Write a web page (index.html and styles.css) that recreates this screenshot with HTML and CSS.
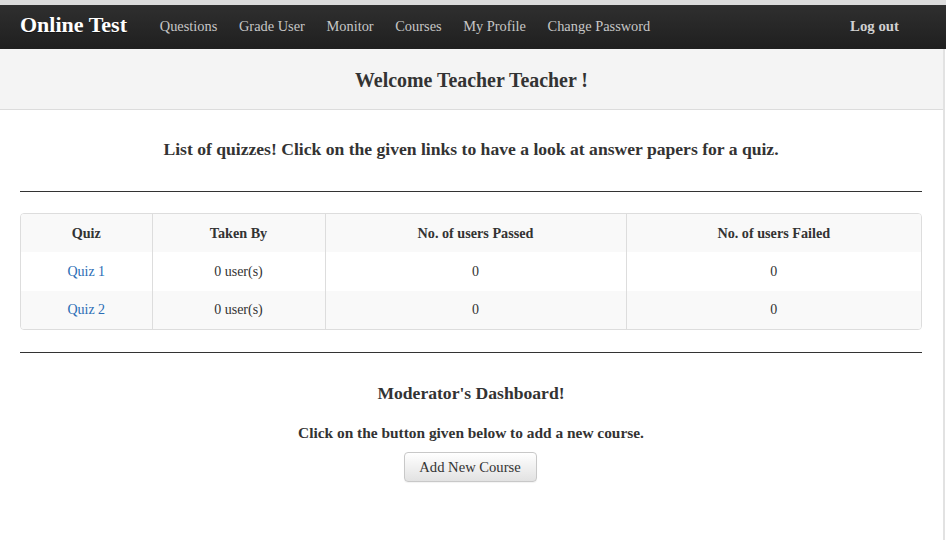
FILE: index.html
```html
<!DOCTYPE html>
<html>
<head>
<meta charset="utf-8">
<title>Online Test</title>
<link rel="stylesheet" href="styles.css">
</head>
<body>
<div class="topstrip"></div>
<nav class="navbar">
  <a class="brand" href="#">Online Test</a>
  <ul class="nav-links">
    <li><a href="#">Questions</a></li>
    <li><a href="#">Grade User</a></li>
    <li><a href="#">Monitor</a></li>
    <li><a href="#">Courses</a></li>
    <li><a href="#">My Profile</a></li>
    <li><a href="#">Change Password</a></li>
  </ul>
  <a class="logout" href="#">Log out</a>
</nav>
<div class="page">
  <div class="welcome"><h2>Welcome Teacher Teacher !</h2></div>
  <div class="content">
    <h3 class="intro">List of quizzes! Click on the given links to have a look at answer papers for a quiz.</h3>
    <hr class="rule">
    <div class="table-wrap">
      <table class="quiz-table">
        <colgroup>
          <col class="c1"><col class="c2"><col class="c3"><col class="c4">
        </colgroup>
        <thead>
          <tr><th>Quiz</th><th>Taken By</th><th>No. of users Passed</th><th>No. of users Failed</th></tr>
        </thead>
        <tbody>
          <tr><td><a href="#">Quiz 1</a></td><td>0 user(s)</td><td>0</td><td>0</td></tr>
          <tr class="alt"><td><a href="#">Quiz 2</a></td><td>0 user(s)</td><td>0</td><td>0</td></tr>
        </tbody>
      </table>
    </div>
    <hr class="rule rule2">
    <h3 class="mod">Moderator's Dashboard!</h3>
    <h4 class="click">Click on the button given below to add a new course.</h4>
    <div class="btn-row"><button class="btn">Add New Course</button></div>
  </div>
</div>
</body>
</html>
```
FILE: styles.css
```css
html, body {
  margin: 0;
  padding: 0;
  background: #fff;
  font-family: "Liberation Serif", "Times New Roman", serif;
  color: #333;
}
.topstrip {
  height: 5px;
  background: #dcdcdc;
}
.navbar {
  height: 44px;
  box-sizing: border-box;
  padding: 0 47px 2px 20px;
  background: linear-gradient(#2f2f2f, #1f1f1f);
  display: flex;
  align-items: center;
}
.navbar a { text-decoration: none; }
.brand {
  color: #fff;
  font-weight: bold;
  font-size: 22px;
  margin-right: 22px;
  margin-bottom: 2px;
  text-shadow: 0 1px 0 rgba(0,0,0,0.4);
}
.nav-links {
  list-style: none;
  display: flex;
  margin: 0;
  padding: 0;
  flex: 1;
}
.nav-links a {
  display: block;
  color: #c6c6c6;
  font-size: 14.4px;
  padding: 0 10.8px;
}
.logout {
  color: #d0d0d0;
  font-weight: bold;
  font-size: 14.8px;
}
.page {
  margin-right: 1px;
  border-right: 2px solid #e2e2e2;
  min-height: 491px;
}
.welcome {
  background: #f4f4f4;
  border-bottom: 1px solid #dcdcdc;
  height: 61px;
  box-sizing: border-box;
  padding-top: 3px;
  display: flex;
  align-items: center;
  justify-content: center;
}
.welcome h2 {
  margin: 0;
  font-size: 19.9px;
  font-weight: bold;
  color: #333;
}
.content {
  padding: 0 21px 0 20px;
}
.intro {
  margin: 29px 0 0;
  font-size: 17.6px;
  line-height: 20px;
  text-align: center;
}
.rule {
  border: 0;
  border-top: 1px solid #333;
  margin: 32px 0 0;
  height: 0;
}
.table-wrap {
  margin-top: 21px;
  border: 1px solid #ddd;
  border-radius: 4px;
  overflow: hidden;
}
.quiz-table {
  width: 100%;
  border-collapse: collapse;
  table-layout: fixed;
  font-size: 14px;
}
.c1 { width: 131px; }
.c2 { width: 173px; }
.c3 { width: 301px; }
.quiz-table th, .quiz-table td {
  text-align: center;
  border-left: 1px solid #ddd;
  padding: 0;
}
.quiz-table th:first-child, .quiz-table td:first-child { border-left: 0; }
.quiz-table thead tr { height: 38px; background: #f9f9f9; }
.quiz-table th { font-weight: bold; font-size: 14.2px; }
.quiz-table tbody tr { height: 39px; background: #fff; }
.quiz-table tbody tr.alt { height: 38px; background: #f9f9f9; }
.quiz-table a { color: #2a6db5; text-decoration: none; }
.rule2 { margin-top: 22px; }
.mod {
  margin: 30px 0 0;
  font-size: 17.6px;
  line-height: 20px;
  text-align: center;
}
.click {
  margin: 21px 0 0;
  font-size: 15.4px;
  line-height: 18px;
  text-align: center;
}
.btn-row {
  display: flex;
  justify-content: center;
  margin-top: 10px;
  padding-right: 2px;
}
.btn {
  font-family: "Liberation Serif", "Times New Roman", serif;
  font-size: 14.6px;
  color: #333;
  width: 133px;
  height: 30px;
  border: 1px solid #c8c8c8;
  border-radius: 4px;
  background: linear-gradient(#ffffff, #e2e2e2);
  box-shadow: 0 1px 1px rgba(0,0,0,0.05);
  padding: 0;
}
```
